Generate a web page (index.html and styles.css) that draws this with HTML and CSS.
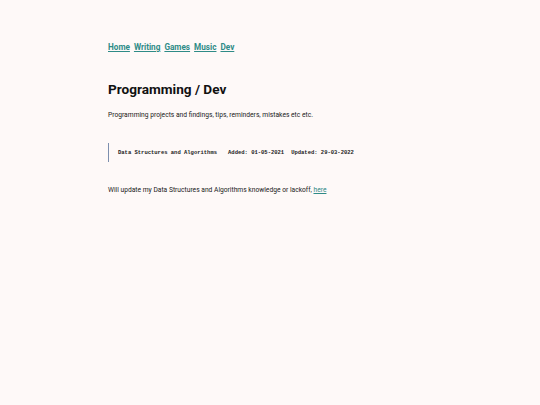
FILE: index.html
```html
<!DOCTYPE html>
<html>
<head>
<meta charset="utf-8">
<link rel="stylesheet" href="styles.css">
</head>
<body>
<div class="page">
  <nav class="nav">
    <a href="#">Home</a>
    <a href="#">Writing</a>
    <a href="#">Games</a>
    <a href="#">Music</a>
    <a href="#">Dev</a>
  </nav>
  <h1 class="title">Programming / Dev</h1>
  <p class="intro">Programming projects and findings, tips, reminders, mistakes etc etc.</p>
  <div class="entry">
    <span class="entry-name">Data Structures and Algorithms</span>
    <span class="entry-date">Added: 01-05-2021</span>
    <span class="entry-date">Updated: 29-03-2022</span>
  </div>
  <p class="note">Will update my Data Structures and Algorithms knowledge or lackoff, <a href="#">here</a></p>
</div>
</body>
</html>
```
FILE: styles.css
```css
html, body {
  margin: 0;
  padding: 0;
  background: #fef9f8;
}
body {
  font-family: Roboto, "Liberation Sans", sans-serif;
  color: #1a1a1a;
}
.page {
  padding: 42px 0 0 108px;
}
.nav {
  display: flex;
  gap: 4px;
  font-size: 8.2px;
  font-weight: 700;
}
.nav a {
  color: #2e8b87;
  text-decoration: underline;
}
.title {
  margin: 29px 0 0;
  font-size: 13.6px;
  font-weight: 700;
  color: #111;
}
.intro {
  margin: 14px 0 0;
  font-size: 6.7px;
}
.entry {
  margin-top: 24px;
  border-left: 1px solid #7d8fae;
  height: 19px;
  padding-left: 9px;
  display: flex;
  align-items: center;
  gap: 11px;
  font-family: "Liberation Mono", monospace;
  font-size: 5.5px;
  font-weight: 700;
  color: #222;
}
.entry-date + .entry-date {
  margin-left: -4px;
}
.note {
  margin: 24px 0 0;
  font-size: 6.7px;
}
.note a {
  color: #2e8b87;
}
```
